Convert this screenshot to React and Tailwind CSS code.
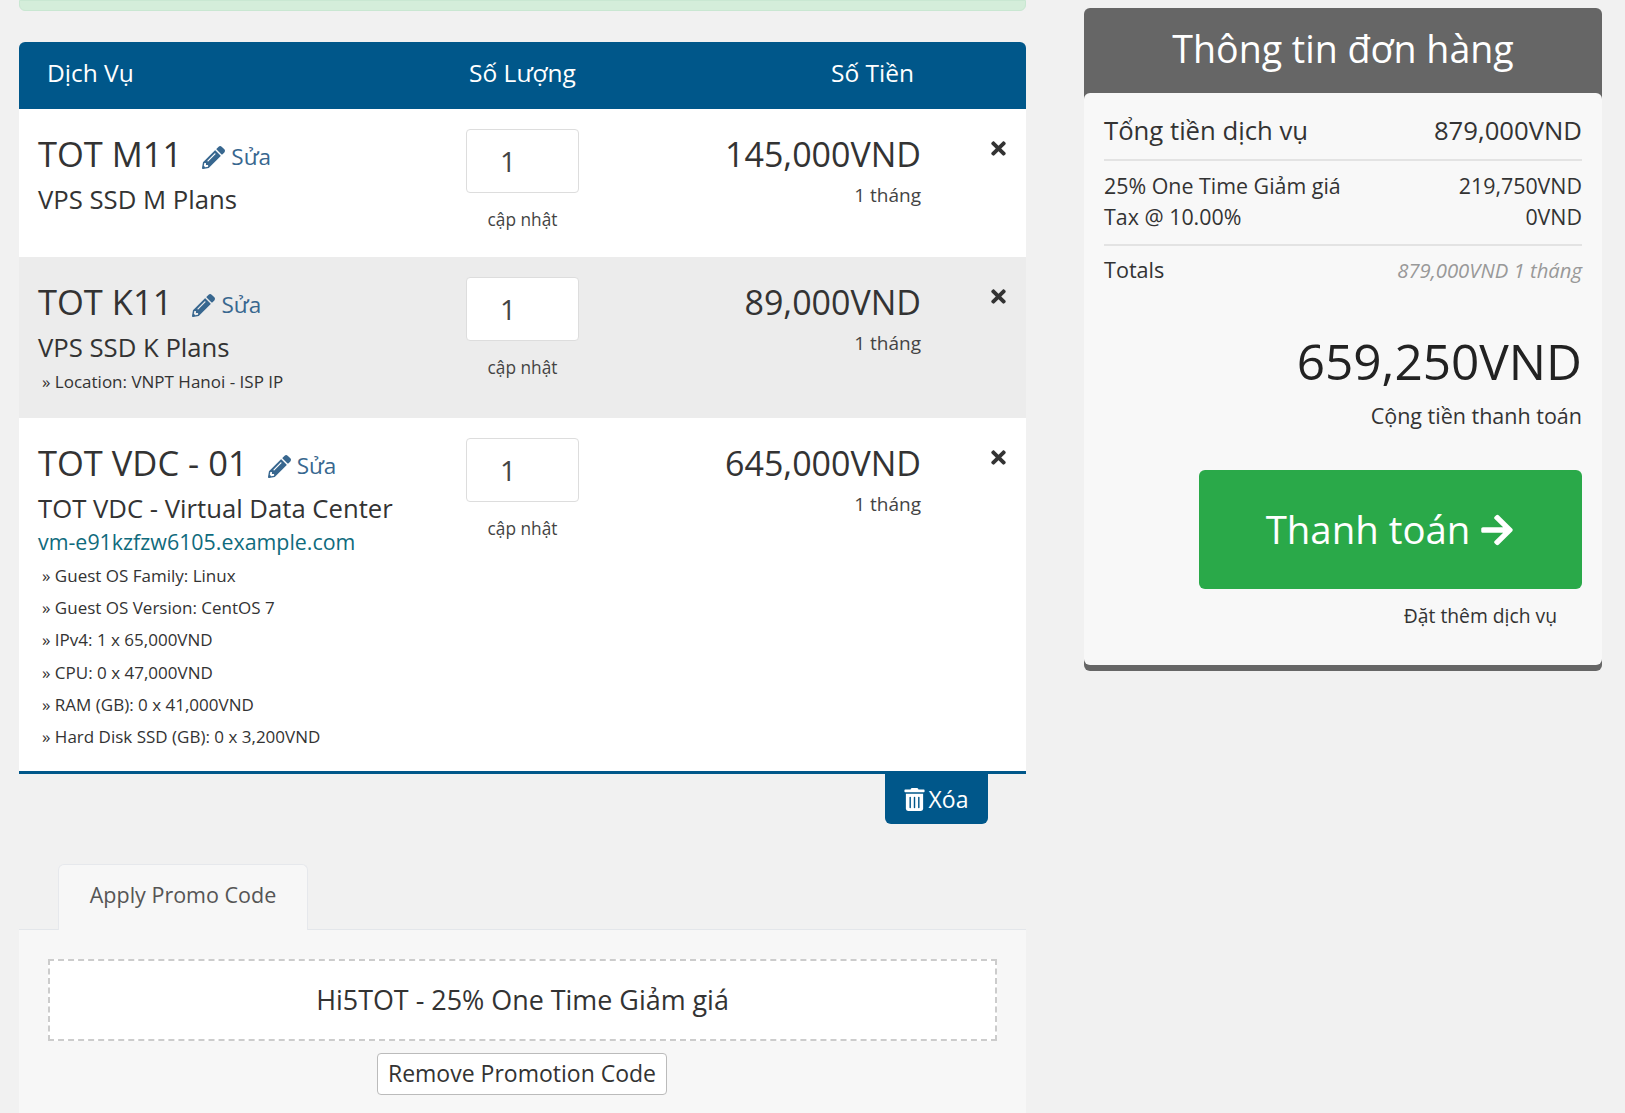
import { FaArrowRight, FaPencilAlt, FaTimes, FaTrashAlt } from "react-icons/fa";

const items = [
  {
    name: "TOT M11",
    group: "VPS SSD M Plans",
    price: "145,000VND",
    height: "h-[148px]",
    bg: "bg-white",
  },
  {
    name: "TOT K11",
    group: "VPS SSD K Plans",
    price: "89,000VND",
    height: "h-[161px]",
    bg: "bg-[#ececec]",
    options: ["Location: VNPT Hanoi - ISP IP"],
  },
  {
    name: "TOT VDC - 01",
    group: "TOT VDC - Virtual Data Center",
    domain: "vm-e91kzfzw6105.example.com",
    price: "645,000VND",
    height: "h-[353px]",
    bg: "bg-white",
    options: [
      "Guest OS Family: Linux",
      "Guest OS Version: CentOS 7",
      "IPv4: 1 x 65,000VND",
      "CPU: 0 x 47,000VND",
      "RAM (GB): 0 x 41,000VND",
      "Hard Disk SSD (GB): 0 x 3,200VND",
    ],
  },
];

function ItemRow({ item }) {
  return (
    <div className={`flex ${item.height} ${item.bg}`}>
      <div className="w-[447px] pl-[19px] pt-[23px]">
        <div className="flex items-center h-[44px]">
          <span className="text-[34.5px] leading-[44px] text-[#333]">{item.name}</span>
          <span className="flex items-center ml-[20px] mt-[6px] text-[#38678f] text-[22.5px] leading-[30px]">
            <FaPencilAlt className="text-[23px] mr-[6px]" />
            Sửa
          </span>
        </div>
        <div className="text-[25.7px] leading-[32px] mt-[8px] text-[#333]">{item.group}</div>
        {item.domain && (
          <div className="text-[21.4px] leading-[28px] mt-[3px] text-[#0f6b7d]">{item.domain}</div>
        )}
        <div className={item.domain ? "mt-[4px]" : "mt-[2px]"}>
          {item.options?.map((option) => (
            <div key={option} className="pl-[4px] text-[17px] leading-[32.2px] text-[#333]">
              » {option}
            </div>
          ))}
        </div>
      </div>
      <div className="w-[113px] pt-[20px] flex flex-col items-center">
        <div className="w-full h-[64px] rounded-[4px] border border-[#ddd] bg-white pl-[33px] flex items-center text-[28px] text-[#444]">
          1
        </div>
        <div className="text-[17.3px] leading-[24px] mt-[15px] text-[#444]">cập nhật</div>
      </div>
      <div className="w-[342px] pt-[21px] text-right">
        <div className="text-[34px] leading-[48px] text-[#333]">{item.price}</div>
        <div className="text-[19px] leading-[24px] mt-[5px] text-[#444]">1 tháng</div>
      </div>
      <div className="pl-[67px] pt-[29px]">
        <FaTimes className="text-[21px] text-[#333]" />
      </div>
    </div>
  );
}

function SummaryRow({ label, value, big }) {
  return (
    <div className={`flex justify-between ${big ? "text-[25.7px] leading-[30px]" : "text-[21.4px] leading-[31px]"}`}>
      <span>{label}</span>
      <span>{value}</span>
    </div>
  );
}

export default function App() {
  return (
    <div className="h-[1113px] overflow-hidden bg-[#f1f1f1] flex font-['Open_Sans',sans-serif]">
      <div className="w-[1007px] ml-[19px] shrink-0">
        <div className="h-[11px] bg-[#d4edda] border border-[#c9e7d2] rounded-b-[6px]" />
        <div className="mt-[31px] h-[67px] pb-[4px] bg-[#00578a] rounded-t-[6px] flex items-center text-white text-[24.5px]">
          <div className="w-[447px] pl-[28px]">Dịch Vụ</div>
          <div className="w-[113px] flex justify-center whitespace-nowrap">Số Lượng</div>
          <div className="w-[335px] text-right">Số Tiền</div>
        </div>

        {items.map((item) => (
          <ItemRow key={item.name} item={item} />
        ))}

        <div className="border-t-[3px] border-[#00578a] flex justify-end pr-[38px]">
          <div className="w-[103px] h-[50px] bg-[#00578a] rounded-b-[6px] flex items-center justify-center text-white text-[23px]">
            <FaTrashAlt className="text-[23px] mr-[3px] -ml-[2px]" />
            Xóa
          </div>
        </div>

        <div className="mt-[40px] ml-[39px] w-[250px] h-[66px] pb-[4px] bg-[#f7f7f7] border border-b-0 border-[#e6e8ec] rounded-t-[6px] flex items-center justify-center text-[21.5px] text-[#555] relative z-10">
          Apply Promo Code
        </div>
        <div className="-mt-px border-t border-[#e3e6ea] bg-[#f7f7f7] h-[200px] px-[29px] pt-[29px]">
          <div className="h-[82px] border-2 border-dashed border-[#ccc] bg-white flex items-center justify-center text-[26.9px] text-[#333]">
            Hi5TOT - 25% One Time Giảm giá
          </div>
          <div className="flex justify-center mt-[12px] pr-[1px]">
            <div className="w-[290px] h-[42px] pb-[2px] bg-white border border-[#bbb] rounded-[4px] flex items-center justify-center text-[23px] whitespace-nowrap text-[#333]">
              Remove Promotion Code
            </div>
          </div>
        </div>
      </div>

      <div className="w-[518px] ml-[58px] mt-[8px] shrink-0 self-start bg-[#666] rounded-[6px] pb-[6px]">
        <div className="h-[85px] pb-[2px] flex items-center justify-center text-white text-[37.6px]">
          Thông tin đơn hàng
        </div>
        <div className="h-[572px] bg-[#f8f8f8] rounded-[6px] px-[20px] text-[#333]">
          <div className="pt-[23px] pb-[13px] border-b-2 border-[#e3e3e3]">
            <SummaryRow big label="Tổng tiền dịch vụ" value="879,000VND" />
          </div>
          <div className="pt-[9px] pb-[12px] border-b-2 border-[#e3e3e3]">
            <SummaryRow label="25% One Time Giảm giá" value="219,750VND" />
            <SummaryRow label="Tax @ 10.00%" value="0VND" />
          </div>
          <div className="flex justify-between items-center pt-[9px]">
            <span className="text-[21.6px] leading-[30px]">Totals</span>
            <span className="text-[20.3px] italic text-[#999]">879,000VND 1 tháng</span>
          </div>
          <div className="text-right text-[49.5px] leading-[68px] mt-[42px] text-[#222]">659,250VND</div>
          <div className="text-right text-[21.5px] leading-[30px] mt-[6px]">Cộng tiền thanh toán</div>
          <div className="flex justify-end mt-[39px]">
            <div className="w-[383px] h-[119px] bg-[#2aa949] rounded-[6px] flex items-center justify-center text-white text-[38.4px]">
              Thanh toán
              <FaArrowRight className="text-[36px] ml-[9px]" />
            </div>
          </div>
          <div className="text-right pr-[25px] mt-[13px] text-[19.3px] leading-[28px]">Đặt thêm dịch vụ</div>
        </div>
      </div>
    </div>
  );
}
